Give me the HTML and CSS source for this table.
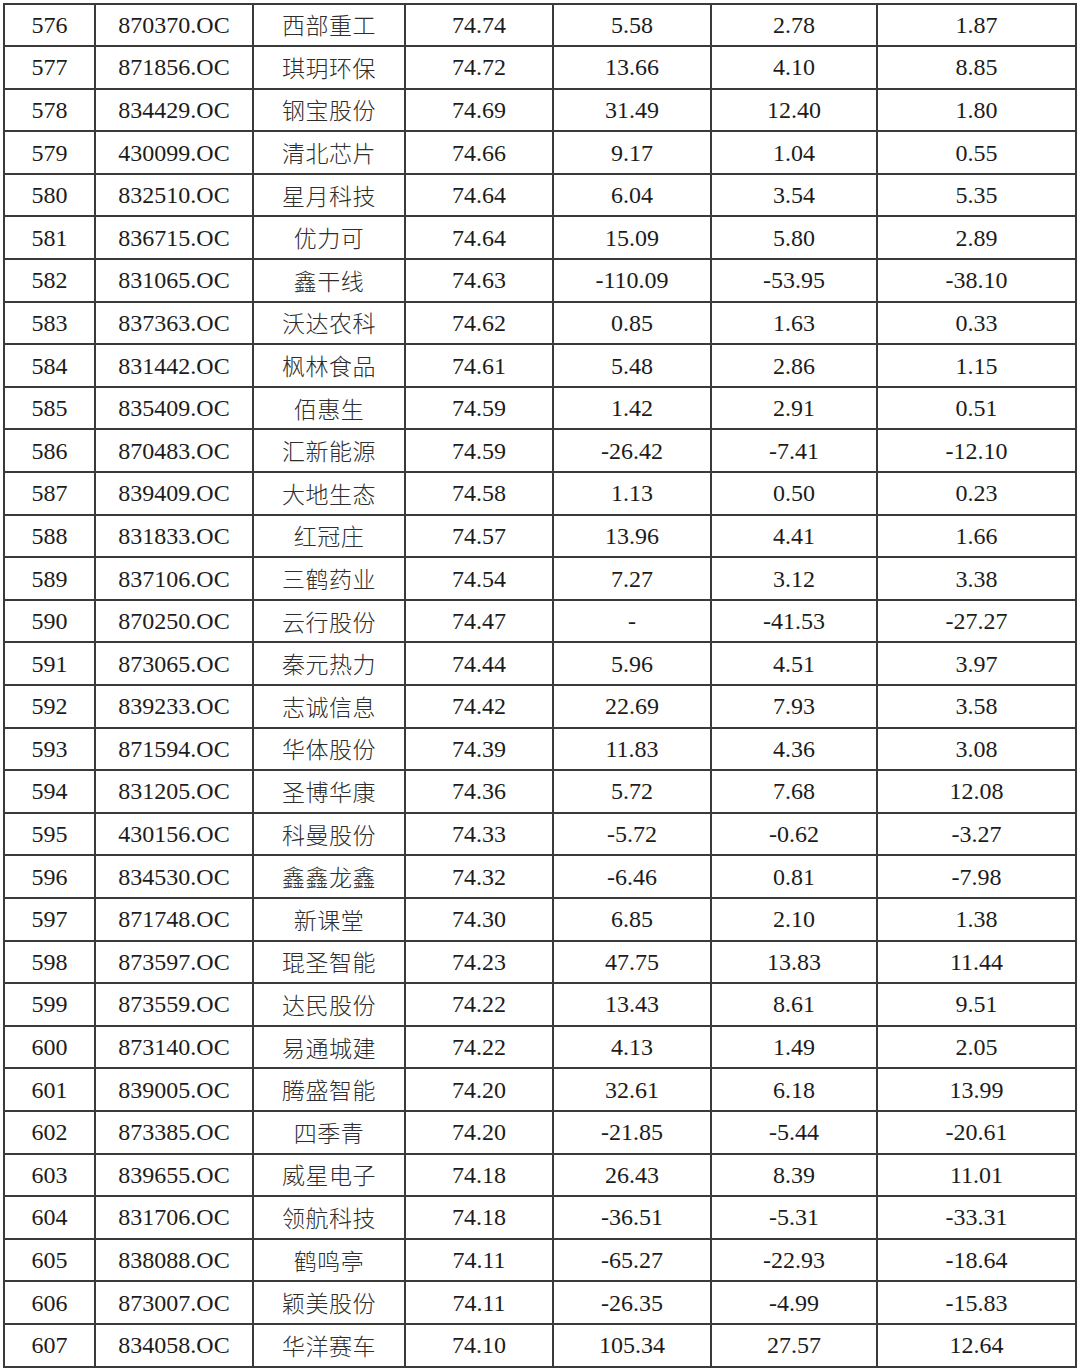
FILE: index.html
```html
<!DOCTYPE html>
<html lang="zh-CN">
<head>
<meta charset="utf-8">
<title>排名表</title>
<link rel="stylesheet" href="styles.css">
</head>
<body>
<table class="rank">
<colgroup>
<col class="c1"><col class="c2"><col class="c3"><col class="c4"><col class="c5"><col class="c6"><col class="c7">
</colgroup>
<tbody>
<tr><td>576</td><td>870370.OC</td><td class="cn">西部重工</td><td>74.74</td><td>5.58</td><td>2.78</td><td>1.87</td></tr>
<tr><td>577</td><td>871856.OC</td><td class="cn">琪玥环保</td><td>74.72</td><td>13.66</td><td>4.10</td><td>8.85</td></tr>
<tr><td>578</td><td>834429.OC</td><td class="cn">钢宝股份</td><td>74.69</td><td>31.49</td><td>12.40</td><td>1.80</td></tr>
<tr><td>579</td><td>430099.OC</td><td class="cn">清北芯片</td><td>74.66</td><td>9.17</td><td>1.04</td><td>0.55</td></tr>
<tr><td>580</td><td>832510.OC</td><td class="cn">星月科技</td><td>74.64</td><td>6.04</td><td>3.54</td><td>5.35</td></tr>
<tr><td>581</td><td>836715.OC</td><td class="cn">优力可</td><td>74.64</td><td>15.09</td><td>5.80</td><td>2.89</td></tr>
<tr><td>582</td><td>831065.OC</td><td class="cn">鑫干线</td><td>74.63</td><td>-110.09</td><td>-53.95</td><td>-38.10</td></tr>
<tr><td>583</td><td>837363.OC</td><td class="cn">沃达农科</td><td>74.62</td><td>0.85</td><td>1.63</td><td>0.33</td></tr>
<tr><td>584</td><td>831442.OC</td><td class="cn">枫林食品</td><td>74.61</td><td>5.48</td><td>2.86</td><td>1.15</td></tr>
<tr><td>585</td><td>835409.OC</td><td class="cn">佰惠生</td><td>74.59</td><td>1.42</td><td>2.91</td><td>0.51</td></tr>
<tr><td>586</td><td>870483.OC</td><td class="cn">汇新能源</td><td>74.59</td><td>-26.42</td><td>-7.41</td><td>-12.10</td></tr>
<tr><td>587</td><td>839409.OC</td><td class="cn">大地生态</td><td>74.58</td><td>1.13</td><td>0.50</td><td>0.23</td></tr>
<tr><td>588</td><td>831833.OC</td><td class="cn">红冠庄</td><td>74.57</td><td>13.96</td><td>4.41</td><td>1.66</td></tr>
<tr><td>589</td><td>837106.OC</td><td class="cn">三鹤药业</td><td>74.54</td><td>7.27</td><td>3.12</td><td>3.38</td></tr>
<tr><td>590</td><td>870250.OC</td><td class="cn">云行股份</td><td>74.47</td><td>-</td><td>-41.53</td><td>-27.27</td></tr>
<tr><td>591</td><td>873065.OC</td><td class="cn">秦元热力</td><td>74.44</td><td>5.96</td><td>4.51</td><td>3.97</td></tr>
<tr><td>592</td><td>839233.OC</td><td class="cn">志诚信息</td><td>74.42</td><td>22.69</td><td>7.93</td><td>3.58</td></tr>
<tr><td>593</td><td>871594.OC</td><td class="cn">华体股份</td><td>74.39</td><td>11.83</td><td>4.36</td><td>3.08</td></tr>
<tr><td>594</td><td>831205.OC</td><td class="cn">圣博华康</td><td>74.36</td><td>5.72</td><td>7.68</td><td>12.08</td></tr>
<tr><td>595</td><td>430156.OC</td><td class="cn">科曼股份</td><td>74.33</td><td>-5.72</td><td>-0.62</td><td>-3.27</td></tr>
<tr><td>596</td><td>834530.OC</td><td class="cn">鑫鑫龙鑫</td><td>74.32</td><td>-6.46</td><td>0.81</td><td>-7.98</td></tr>
<tr><td>597</td><td>871748.OC</td><td class="cn">新课堂</td><td>74.30</td><td>6.85</td><td>2.10</td><td>1.38</td></tr>
<tr><td>598</td><td>873597.OC</td><td class="cn">琨圣智能</td><td>74.23</td><td>47.75</td><td>13.83</td><td>11.44</td></tr>
<tr><td>599</td><td>873559.OC</td><td class="cn">达民股份</td><td>74.22</td><td>13.43</td><td>8.61</td><td>9.51</td></tr>
<tr><td>600</td><td>873140.OC</td><td class="cn">易通城建</td><td>74.22</td><td>4.13</td><td>1.49</td><td>2.05</td></tr>
<tr><td>601</td><td>839005.OC</td><td class="cn">腾盛智能</td><td>74.20</td><td>32.61</td><td>6.18</td><td>13.99</td></tr>
<tr><td>602</td><td>873385.OC</td><td class="cn">四季青</td><td>74.20</td><td>-21.85</td><td>-5.44</td><td>-20.61</td></tr>
<tr><td>603</td><td>839655.OC</td><td class="cn">威星电子</td><td>74.18</td><td>26.43</td><td>8.39</td><td>11.01</td></tr>
<tr><td>604</td><td>831706.OC</td><td class="cn">领航科技</td><td>74.18</td><td>-36.51</td><td>-5.31</td><td>-33.31</td></tr>
<tr><td>605</td><td>838088.OC</td><td class="cn">鹤鸣亭</td><td>74.11</td><td>-65.27</td><td>-22.93</td><td>-18.64</td></tr>
<tr><td>606</td><td>873007.OC</td><td class="cn">颖美股份</td><td>74.11</td><td>-26.35</td><td>-4.99</td><td>-15.83</td></tr>
<tr><td>607</td><td>834058.OC</td><td class="cn">华洋赛车</td><td>74.10</td><td>105.34</td><td>27.57</td><td>12.64</td></tr>
</tbody>
</table>
</body>
</html>
```

FILE: styles.css
```css
html, body {
  margin: 0;
  padding: 0;
  background: #ffffff;
}

body {
  padding: 2.5px 0 0 3px;
}

.rank {
  border-collapse: collapse;
  table-layout: fixed;
  width: 1072px;
  font-family: "Liberation Serif", "Noto Sans CJK SC", serif;
  font-size: 24px;
  color: #1c1c1c;
}

.c1 { width: 91px; }
.c2 { width: 158px; }
.c3 { width: 152px; }
.c4 { width: 148px; }
.c5 { width: 158px; }
.c6 { width: 166px; }
.c7 { width: 199px; }

.rank td {
  border: 2px solid #3a3a3a;
  height: 40.6px;
  padding: 0;
  text-align: center;
  vertical-align: middle;
  line-height: 1;
  white-space: nowrap;
}

.rank td.cn {
  font-family: "Noto Sans CJK SC", sans-serif;
  font-size: 23px;
  font-weight: 300;
  color: #2e2e2e;
  letter-spacing: 0.5px;
}
```
